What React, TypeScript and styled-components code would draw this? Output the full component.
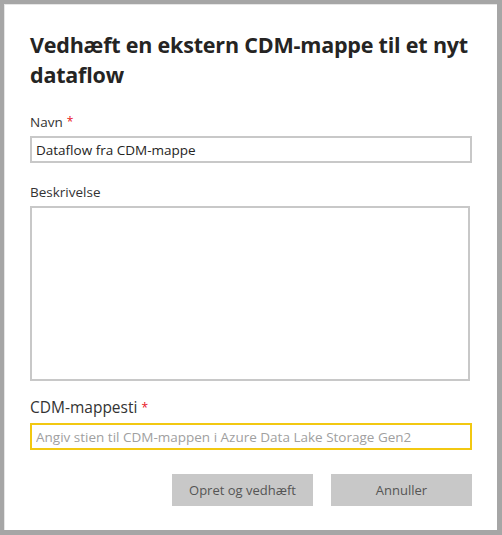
import React from "react";
import styled, { createGlobalStyle } from "styled-components";

const Global = createGlobalStyle`
  html, body { margin: 0; padding: 0; background: #a6a6a6; }
  body { font-family: "Open Sans", "Noto Sans", sans-serif; }
  * { box-sizing: border-box; }
`;

const Frame = styled.div`
  width: 502px;
  height: 535px;
  padding: 4px 5px 5px 4px;
  background: #a6a6a6;
`;

const Dialog = styled.div`
  width: 100%;
  height: 100%;
  background: #ffffff;
  box-shadow: inset 1px 1px 0 #e6e6e6;
  padding: 26px 25px 0 26px;
  display: flex;
  flex-direction: column;
`;

const Title = styled.h1`
  margin: 0 0 22px 0;
  font-size: 21.5px;
  line-height: 30px;
  font-weight: 700;
  color: #252423;
  letter-spacing: -0.2px;
`;

const Label = styled.label<{ $large?: boolean }>`
  display: block;
  font-size: ${(p) => (p.$large ? "15.5px" : "13.5px")};
  line-height: 20px;
  color: #333;
  margin-bottom: ${(p) => (p.$large ? "5px" : "4px")};
`;

const Req = styled.span`
  color: #e81123;
  margin-left: 4px;
  font-size: 12px;
  vertical-align: 1px;
`;

const Field = styled.div<{ $gap: number }>`
  margin-bottom: ${(p) => p.$gap}px;
`;

const Input = styled.input<{ $accent?: boolean }>`
  display: block;
  width: 442px;
  height: 27px;
  border: 2px solid ${(p) => (p.$accent ? "#f2c811" : "#c8c8c8")};
  padding: 0 4px;
  font-family: "Open Sans", "Noto Sans", sans-serif;
  font-size: 13.5px;
  color: #252423;
  outline: none;
  background: #fff;
  &::placeholder { color: #a0a0a0; }
`;

const TextArea = styled.textarea`
  display: block;
  width: 440px;
  height: 175px;
  border: 2px solid #c8c8c8;
  resize: none;
  outline: none;
  font-family: "Open Sans", "Noto Sans", sans-serif;
`;

const Actions = styled.div`
  display: flex;
  justify-content: flex-end;
  gap: 18px;
  margin-top: 24px;
`;

const Button = styled.button`
  width: 141px;
  height: 32px;
  background: #c8c8c8;
  border: none;
  font-family: "Open Sans", "Noto Sans", sans-serif;
  font-size: 13px;
  color: #555;
  padding: 0;
`;

export default function App() {
  return (
    <>
      <Global />
      <Frame>
        <Dialog>
          <Title>Vedhæft en ekstern CDM-mappe til et nyt dataflow</Title>
          <Field $gap={19}>
            <Label>
              Navn<Req>*</Req>
            </Label>
            <Input defaultValue="Dataflow fra CDM-mappe" />
          </Field>
          <Field $gap={16}>
            <Label>Beskrivelse</Label>
            <TextArea />
          </Field>
          <Field $gap={0}>
            <Label $large>
              CDM-mappesti<Req>*</Req>
            </Label>
            <Input
              $accent
              placeholder="Angiv stien til CDM-mappen i Azure Data Lake Storage Gen2"
            />
          </Field>
          <Actions>
            <Button>Opret og vedhæft</Button>
            <Button>Annuller</Button>
          </Actions>
        </Dialog>
      </Frame>
    </>
  );
}
